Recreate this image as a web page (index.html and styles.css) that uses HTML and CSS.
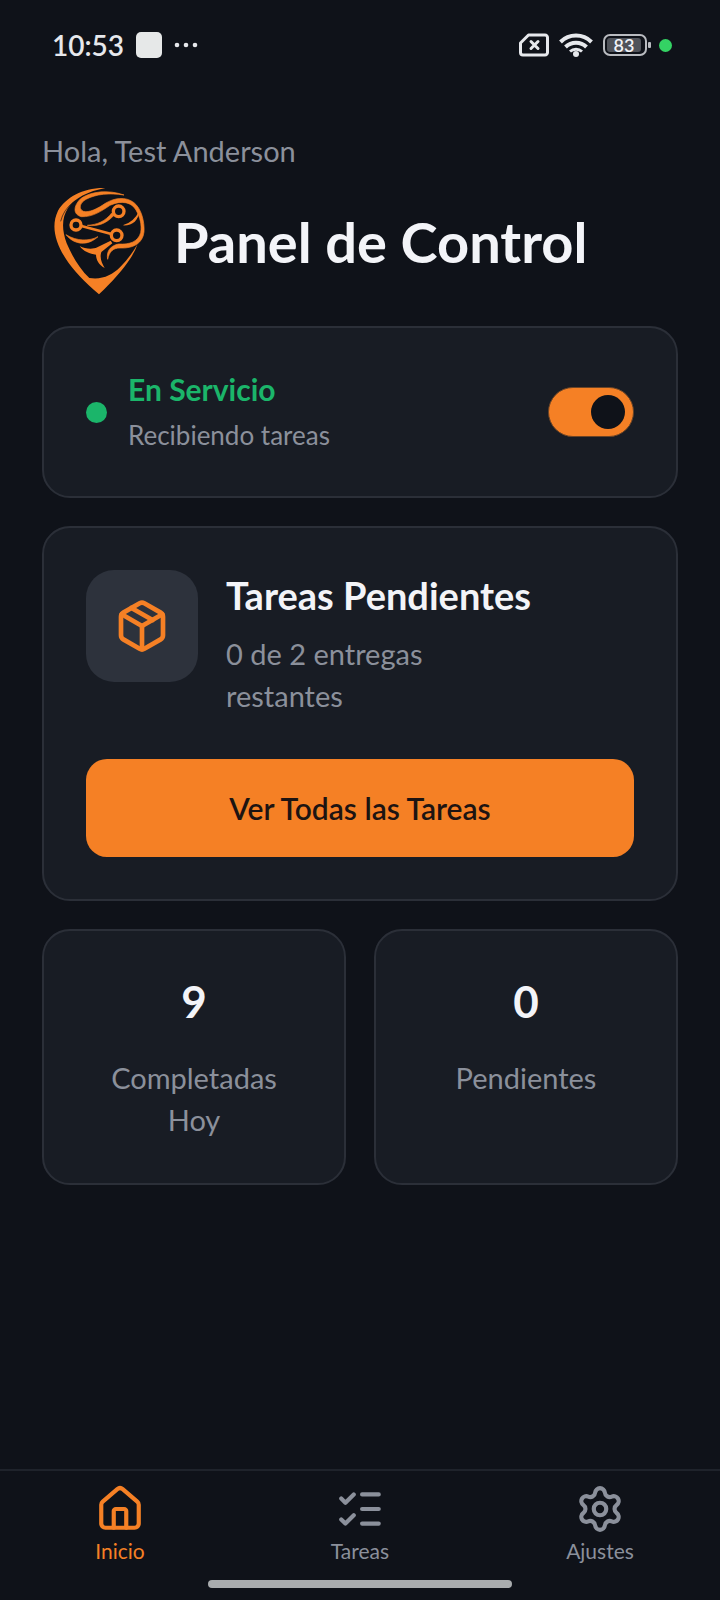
FILE: index.html
```html
<!DOCTYPE html>
<html lang="es">

<head>
    <meta charset="UTF-8">
    <meta name="viewport" content="width=device-width, initial-scale=1.0">
    <title>Panel de Control</title>
    <link rel="stylesheet" href="styles.css">
</head>

<body>

    <div class="status-bar">
        <div class="status-left">
            <span class="time">10:53</span>
            <span class="square"></span>
            <svg width="24" height="6" viewBox="0 0 24 6" fill="#e6e8ec">
                <circle cx="3" cy="3" r="2.3" />
                <circle cx="12" cy="3" r="2.3" />
                <circle cx="21" cy="3" r="2.3" />
            </svg>
        </div>
        <div class="status-right">
            <svg width="30" height="24" viewBox="0 0 30 24" fill="none" stroke="#e6e8ec" stroke-width="3" stroke-linejoin="round" stroke-linecap="round">
                <path d="M9.5 2H26a2.500 2.500 0 0 1 2.500 2.500v15A2.500 2.500 0 0 1 26 22H4a2.500 2.500 0 0 1-2.500-2.500V10z" />
                <path d="M12 8.500l7 7M19 8.500l-7 7" />
            </svg>
            <svg width="34" height="24" viewBox="0 0 34 24" fill="none" stroke="#e6e8ec" stroke-width="4">
                <path d="M1.500 9a22 22 0 0 1 31 0" />
                <path d="M6.500 14a15 15 0 0 1 21 0" />
                <path d="M11 18.500a9 9 0 0 1 12 0" stroke-width="3" />
                <circle cx="17" cy="21" r="3" fill="#e6e8ec" stroke="none" />
            </svg>
            <div class="battery"><span class="level">83</span></div>
            <span class="mic-dot"></span>
        </div>
    </div>

    <main>
        <p class="hello">Hola, Test Anderson</p>
        <header>
            <svg class="logo" viewBox="6 12 336 336" fill="#f58025">
                <!-- pin -->
                <path d="M196 24C130 22 78 52 54 92C32 138 46 186 76 234C100 272 134 306 177 343C216 306 250 268 272 234Q286 212 293 192Q270 232 240 262C216 286 186 300 148 294C120 268 96 228 80 190C64 146 66 112 84 84C104 54 144 34 196 24z" />
                <!-- brain -->
                <path d="M252 45C204 28 152 34 122 56C98 80 100 104 124 110C158 112 186 92 210 76C244 60 276 66 289 92C300 112 306 134 302 158C294 186 268 194 236 192C212 196 198 214 203 238C208 214 220 204 240 204C280 206 308 190 312 156C314 124 304 86 282 68C256 48 222 54 196 70C170 88 148 98 130 94C114 86 120 68 138 58C168 42 208 38 252 45z" stroke="#f58025" stroke-width="2" />
                <path d="M179 89C166 102 148 106 126 104Q150 102 179 89z" stroke="#f58025" stroke-width="3" />
                <path d="M298 92C296 122 276 138 248 136Q282 126 298 92z" />
                <path d="M78 164C104 196 144 198 174 170C148 184 110 184 78 164z" stroke="#f58025" stroke-width="2" />
                <path d="M119 198C134 206 156 210 172 202L212 182L217 190L184 216C178 234 186 250 194 264C176 254 168 238 168 224C150 222 130 214 119 198z" />
                <path d="M142 136C176 140 200 130 224 104L216 98C196 124 172 134 142 136z" stroke="#f58025" stroke-width="2" />
                <g fill="none" stroke="#f58025">
                    <path d="M124 138L214 162" stroke-width="8" />
                    <circle cx="108" cy="135" r="15" stroke-width="10" />
                    <circle cx="236" cy="94" r="16" stroke-width="10" />
                    <circle cx="230" cy="166" r="16" stroke-width="10" />
                    <path d="M62 124Q70 90 100 66" stroke="#0f1219" stroke-width="2" />
                </g>
            </svg>
            <h1>Panel de Control</h1>
        </header>

        <section class="card service">
            <span class="service-dot"></span>
            <label class="service-text" for="service">
                <strong>En Servicio</strong>
                <span>Recibiendo tareas</span>
            </label>
            <input type="checkbox" id="service" class="switch" role="switch" checked>
        </section>

        <section class="card">
            <div class="tasks">
                <div class="icon-box">
                    <svg class="icon" width="56" height="56" viewBox="0 0 24 24">
                        <path d="M11 21.73a2 2 0 0 0 2 0l7-4A2 2 0 0 0 21 16V8a2 2 0 0 0-1-1.73l-7-4a2 2 0 0 0-2 0l-7 4A2 2 0 0 0 3 8v8a2 2 0 0 0 1 1.73z" />
                        <path d="M12 22V12" />
                        <path d="M3.29 7L12 12l8.71-5" />
                        <path d="M7.5 4.27l9 5.15" />
                    </svg>
                </div>
                <div class="tasks-text">
                    <h2>Tareas Pendientes</h2>
                    <p>0 de 2 entregas<br>restantes</p>
                </div>
            </div>
            <button class="all-tasks">Ver Todas las Tareas</button>
        </section>

        <div class="stats">
            <section class="card stat">
                <strong>9</strong>
                <p>Completadas<br>Hoy</p>
            </section>
            <section class="card stat">
                <strong>0</strong>
                <p>Pendientes</p>
            </section>
        </div>
    </main>

    <nav>
        <div class="tabs">
            <a href="#inicio" class="active">
                <svg class="icon" width="50" height="50" viewBox="0 0 24 24">
                    <path d="M15 21v-8a1 1 0 0 0-1-1h-4a1 1 0 0 0-1 1v8" />
                    <path d="M3 10a2 2 0 0 1 .709-1.528l7-6a2 2 0 0 1 2.582 0l7 6A2 2 0 0 1 21 10v9a2 2 0 0 1-2 2H5a2 2 0 0 1-2-2z" />
                </svg>
                Inicio
            </a>
            <a href="#tareas">
                <svg class="icon" width="50" height="50" viewBox="0 0 24 24">
                    <path d="M13 5h8M13 12h8M13 19h8" />
                    <path d="M3 17l2 2 4-4M3 7l2 2 4-4" />
                </svg>
                Tareas
            </a>
            <a href="#ajustes">
                <svg class="icon" width="50" height="50" viewBox="0 0 24 24">
                    <path d="M9.671 4.136a2.34 2.34 0 0 1 4.659 0 2.34 2.34 0 0 0 3.319 1.915 2.34 2.34 0 0 1 2.33 4.033 2.34 2.34 0 0 0 0 3.831 2.34 2.34 0 0 1-2.33 4.033 2.34 2.34 0 0 0-3.319 1.915 2.34 2.34 0 0 1-4.659 0 2.34 2.34 0 0 0-3.32-1.915 2.34 2.34 0 0 1-2.33-4.033 2.34 2.34 0 0 0 0-3.831A2.34 2.34 0 0 1 6.35 6.051a2.34 2.34 0 0 0 3.319-1.915" />
                    <circle cx="12" cy="12" r="3" />
                </svg>
                Ajustes
            </a>
        </div>
        <div class="home-bar"></div>
    </nav>

</body>

</html>
```
FILE: styles.css
```css
* {
    box-sizing: border-box;
    margin: 0;
    padding: 0;
}
body {
    min-height: 100vh;
    display: flex;
    flex-direction: column;
    background-color: #0f1219;
    color: #8b909b;
    font-family: Lato, "Open Sans", sans-serif;
    font-size: 29px;
    line-height: 42px;
}

/* status bar */
.status-bar {
    display: flex;
    justify-content: space-between;
    align-items: center;
    height: 90px;
    padding: 0 48px 0 52px;
}
.status-left, .status-right {
    display: flex;
    align-items: center;
    gap: 12px;
}
.status-right {
    gap: 10px;
}
.time {
    color: #e6e8ec;
    font-size: 28px;
    font-weight: 600;
}
.square {
    width: 26px;
    height: 26px;
    border-radius: 5px;
    background-color: #e6e8e8;
}
.battery {
    position: relative;
    width: 44px;
    height: 22px;
    padding: 2px;
    border: 2px solid #b9bbc0;
    border-radius: 7px;
}
.battery::after {
    content: "";
    position: absolute;
    top: 6px;
    right: -6px;
    width: 3px;
    height: 6px;
    border-radius: 1px;
    background-color: #b9bbc0;
}
.level {
    display: block;
    width: 34px;
    border-radius: 3px;
    background-color: #50535a;
    color: #f3f4f8;
    font-size: 18px;
    font-weight: 600;
    line-height: 14px;
    text-align: center;
}
.mic-dot {
    width: 13px;
    height: 13px;
    margin-left: 2px;
    border-radius: 50%;
    background-color: #34d364;
}

/* content */
main {
    flex: 1;
    display: flex;
    flex-direction: column;
    padding: 40px 42px 28px;
}
header {
    display: flex;
    align-items: center;
    gap: 20px;
    margin: 12px 0 30px;
}
.logo {
    width: 112px;
    height: 112px;
}
h1 {
    padding-top: 4px;
    color: #f3f4f8;
    font-size: 56px;
    font-weight: 700;
    line-height: 70px;
}
.card {
    padding: 42px;
    margin-bottom: 28px;
    border: 2px solid #2b2f38;
    border-radius: 28px;
    background-color: #181c24;
}
.service {
    display: flex;
    align-items: center;
    height: 172px;
}
.service-dot {
    width: 21px;
    height: 21px;
    border-radius: 50%;
    background-color: #1bb56a;
}
.service-text {
    flex: 1;
    display: flex;
    flex-direction: column;
    gap: 4px;
    margin-left: 21px;
    font-size: 26px;
}
.service-text strong {
    color: #1bb56a;
    font-size: 30px;
    font-weight: 700;
}
.switch {
    appearance: none;
    display: flex;
    align-items: center;
    width: 86px;
    height: 50px;
    padding: 0 8px;
    border: 1px solid #6b4426;
    border-radius: 25px;
    background-color: #2d323c;
}
.switch::before {
    content: "";
    width: 34px;
    height: 34px;
    border-radius: 50%;
    background-color: #0f1219;
}
.switch:checked {
    justify-content: flex-end;
    background-color: #f58025;
}
.icon {
    fill: none;
    stroke: currentColor;
    stroke-width: 2;
    stroke-linecap: round;
    stroke-linejoin: round;
}
.tasks {
    display: flex;
    gap: 28px;
    margin-bottom: 42px;
}
.icon-box {
    display: flex;
    justify-content: center;
    align-items: center;
    width: 112px;
    height: 112px;
    border-radius: 28px;
    background-color: #2d323c;
    color: #f58025;
}
h2 {
    margin: 4px 0 17px;
    color: #f3f4f8;
    font-size: 38px;
    font-weight: 700;
    line-height: 42px;
}
.all-tasks {
    width: 100%;
    height: 98px;
    border: none;
    border-radius: 21px;
    background-color: #f58025;
    color: #1d1412;
    font-family: inherit;
    font-size: 30px;
    font-weight: 600;
    cursor: pointer;
}
.stats {
    display: grid;
    grid-template-columns: 1fr 1fr;
    gap: 28px;
}
.stat {
    text-align: center;
}
.stat strong {
    display: block;
    margin-bottom: 28px;
    color: #f3f4f8;
    font-size: 44px;
    line-height: 56px;
}

/* bottom navigation */
nav {
    border-top: 2px solid #1f232b;
}
.tabs {
    display: flex;
    padding-top: 13px;
}
.tabs a {
    flex: 1;
    display: flex;
    flex-direction: column;
    align-items: center;
    color: #8b909b;
    font-size: 21px;
    line-height: 34px;
    text-decoration: none;
}
.tabs .active {
    color: #f58025;
}
.home-bar {
    width: 304px;
    max-width: 60%;
    height: 8px;
    margin: 12px auto;
    border-radius: 4px;
    background-color: #a9acae;
}
```
